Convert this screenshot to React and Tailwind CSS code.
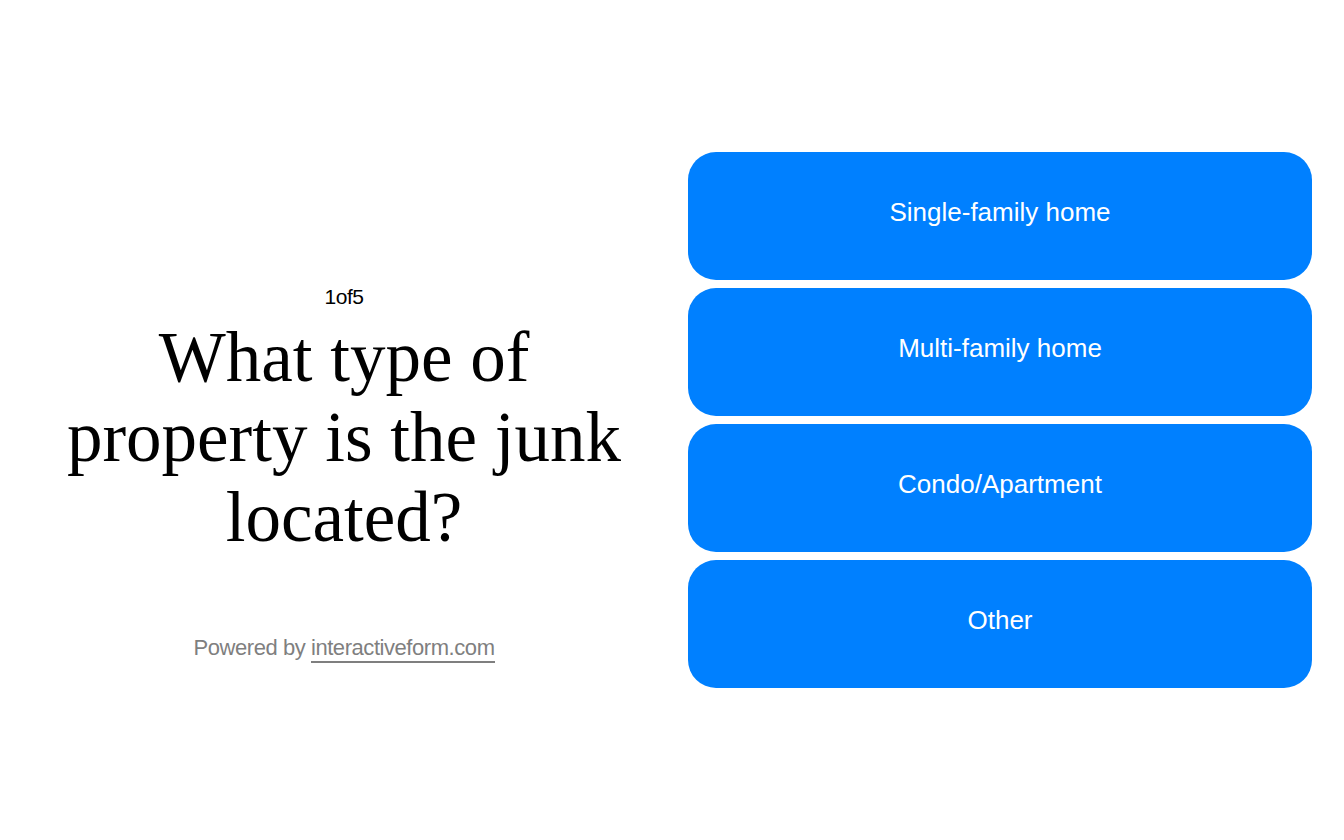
export default function App() {
  const options = ["Single-family home", "Multi-family home", "Condo/Apartment", "Other"];

  return (
    <div className="w-[1344px] h-[840px] bg-white flex px-8 gap-8">
      {/* question side */}
      <div className="w-[624px] flex flex-col items-center pt-[285px]">
        <p
          className="text-[21px] leading-[24px] tracking-[-0.02em] text-black"
          style={{ fontFamily: '"Liberation Sans", Arial, sans-serif' }}
        >
          1of5
        </p>
        <h1
          className="mt-[8px] text-[71px] leading-[80px] text-black text-center w-[570px]"
          style={{ fontFamily: '"Liberation Serif", "Times New Roman", serif' }}
        >
          What type of property is the junk located?
        </h1>
        <p
          className="mt-[79px] text-[22px] leading-[24px] text-[#7f7f7f] tracking-[-0.02em]"
          style={{ fontFamily: '"Liberation Sans", Arial, sans-serif' }}
        >
          Powered by{" "}
          <span className="border-b-2 border-[#7f7f7f] pb-[1px]">interactiveform.com</span>
        </p>
      </div>

      {/* options side */}
      <div className="w-[624px] flex flex-col gap-2 pt-[152px]">
        {options.map((opt) => (
          <button
            key={opt}
            className="h-[128px] w-full rounded-[28px] bg-[#0080ff] text-white text-[26px] pb-[7px] flex items-center justify-center"
            style={{ fontFamily: '"Liberation Sans", Arial, sans-serif' }}
          >
            {opt}
          </button>
        ))}
      </div>
    </div>
  );
}
